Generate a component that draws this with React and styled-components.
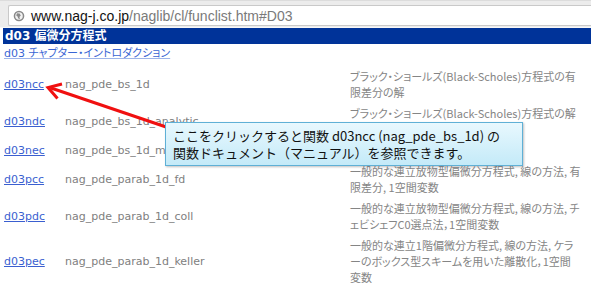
import React from 'react'
import styled, { createGlobalStyle } from 'styled-components'

const GlobalStyle = createGlobalStyle`
    body {
        margin: 0;
        background: #ffffff;
    }
`

const Page = styled.div`
    position: relative;
    width: 591px;
    height: 290px;
    overflow: hidden;
    background: #ffffff;
`

const Toolbar = styled.div`
    height: 28px;
    box-sizing: border-box;
    padding: 4px 0 2px 8px;
    background: #ececec;
    border-top: 1px solid #dcdcdc;
    border-bottom: 1px solid #f8f8f8;
`

const AddressField = styled.div`
    height: 21px;
    box-sizing: border-box;
    display: flex;
    align-items: center;
    gap: 6px;
    padding-left: 4px;
    background: #ffffff;
    border: 1px solid #c9c9c9;
    border-right: none;
    border-radius: 2px 0 0 2px;
    font-family: "Liberation Sans", Arial, sans-serif;
    font-size: 14px;
`

const Host = styled.span`
    color: #111111;
`

const Path = styled.span`
    color: #7a7a7a;
`

const Content = styled.div`
    padding-left: 3px;
`

const SectionHeader = styled.div`
    height: 16px;
    line-height: 16px;
    padding-left: 2px;
    background: #003399;
    color: #ffffff;
    font-family: "DejaVu Sans", "Noto Sans CJK JP", sans-serif;
    font-size: 12px;
    font-weight: bold;
`

const IntroLink = styled.a`
    display: block;
    margin: 2px 0 4px 1px;
    line-height: 16px;
    color: #3a66d4;
    font-family: "DejaVu Sans", "Noto Sans CJK JP", sans-serif;
    font-size: 11px;
    font-feature-settings: "palt";
    text-decoration: underline;
    text-decoration-color: #9db4ea;
`

const FuncTable = styled.div`
    display: grid;
    grid-template-columns: 61px 285px 1fr;
    padding-left: 1px;
`

const Cell = styled.div`
    display: flex;
    align-items: center;
    padding: 2px 0 3px;
`

const FuncLink = styled.a`
    color: #3a5fd0;
    font-family: "DejaVu Sans", Verdana, sans-serif;
    font-size: 11px;
    text-decoration: underline;
`

const FuncName = styled.span`
    color: #808080;
    font-family: "DejaVu Sans", Verdana, sans-serif;
    font-size: 11px;
`

const Desc = styled.div`
    color: #858585;
    font-family: "Noto Sans CJK JP", sans-serif;
    font-size: 11px;
    font-feature-settings: "palt";
    line-height: 16px;
    white-space: nowrap;
`

const Callout = styled.div`
    position: absolute;
    left: 165px;
    top: 122px;
    width: 358px;
    height: 44px;
    box-sizing: border-box;
    padding: 4px 7px;
    background: linear-gradient(#e8f8fe, #c4eaf8);
    border: 1px solid #5fb0d6;
    box-shadow: 1px 1px 2px rgba(0, 0, 0, 0.25);
    color: #111111;
    font-family: "Noto Sans CJK JP", sans-serif;
    font-size: 13px;
    line-height: 17px;
    white-space: nowrap;
`

const ArrowLayer = styled.svg`
    position: absolute;
    left: 0;
    top: 0;
    pointer-events: none;
`

const funcs = [
    { id: 'd03ncc', name: 'nag_pde_bs_1d', desc: ['ブラック・ショールズ(Black-Scholes)方程式の有', '限差分の解'] },
    { id: 'd03ndc', name: 'nag_pde_bs_1d_analytic', desc: ['ブラック・ショールズ(Black-Scholes)方程式の解', '析解'] },
    { id: 'd03nec', name: 'nag_pde_bs_1d_means', desc: ['ブラック・ショールズ方程式の平均'] },
    { id: 'd03pcc', name: 'nag_pde_parab_1d_fd', desc: ['一般的な連立放物型偏微分方程式, 線の方法, 有', '限差分, 1空間変数'] },
    { id: 'd03pdc', name: 'nag_pde_parab_1d_coll', desc: ['一般的な連立放物型偏微分方程式, 線の方法, チ', 'ェビシェフC0選点法，1空間変数'] },
    { id: 'd03pec', name: 'nag_pde_parab_1d_keller', desc: ['一般的な連立1階偏微分方程式, 線の方法, ケラ', 'ーのボックス型スキームを用いた離散化，1空間', '変数'] },
]

function Globe() {
    return (
        <svg width="12" height="12" viewBox="0 0 12 12">
            <circle cx="6" cy="6" r="5.3" fill="#8a8a8a" />
            <circle cx="6" cy="6" r="3.8" fill="#f2f2f2" />
            <path d="M4 3.2 L6.6 3.6 L7.8 5.4 L6.4 7 L7 9 L5.2 8.6 L4.6 6.6 L3.2 5.6 Z" fill="#8a8a8a" />
        </svg>
    )
}

function App() {
    return (
        <Page>
            <GlobalStyle />
            <Toolbar>
                <AddressField>
                    <Globe />
                    <span><Host>www.nag-j.co.jp</Host><Path>/naglib/cl/funclist.htm#D03</Path></span>
                </AddressField>
            </Toolbar>
            <Content>
                <SectionHeader>d03 偏微分方程式</SectionHeader>
                <IntroLink href="#">d03 チャプター・イントロダクション</IntroLink>
                <FuncTable>
                    {funcs.map(f => (
                        <React.Fragment key={f.id}>
                            <Cell><FuncLink href="#">{f.id}</FuncLink></Cell>
                            <Cell><FuncName>{f.name}</FuncName></Cell>
                            <Cell>
                                <Desc>
                                    {f.desc.map((line, i) => <div key={i}>{line}</div>)}
                                </Desc>
                            </Cell>
                        </React.Fragment>
                    ))}
                </FuncTable>
            </Content>
            <ArrowLayer width="591" height="290">
                <line x1="51" y1="88" x2="172" y2="129" stroke="#f01010" strokeWidth="3" />
                <polyline points="62,84 48,87.5 57.5,98.5" fill="none" stroke="#f01010" strokeWidth="3" strokeLinejoin="miter" />
            </ArrowLayer>
            <Callout>
                <div>ここをクリックすると関数 d03ncc (nag_pde_bs_1d) の</div>
                <div>関数ドキュメント（マニュアル）を参照できます。</div>
            </Callout>
        </Page>
    )
}

export default App
